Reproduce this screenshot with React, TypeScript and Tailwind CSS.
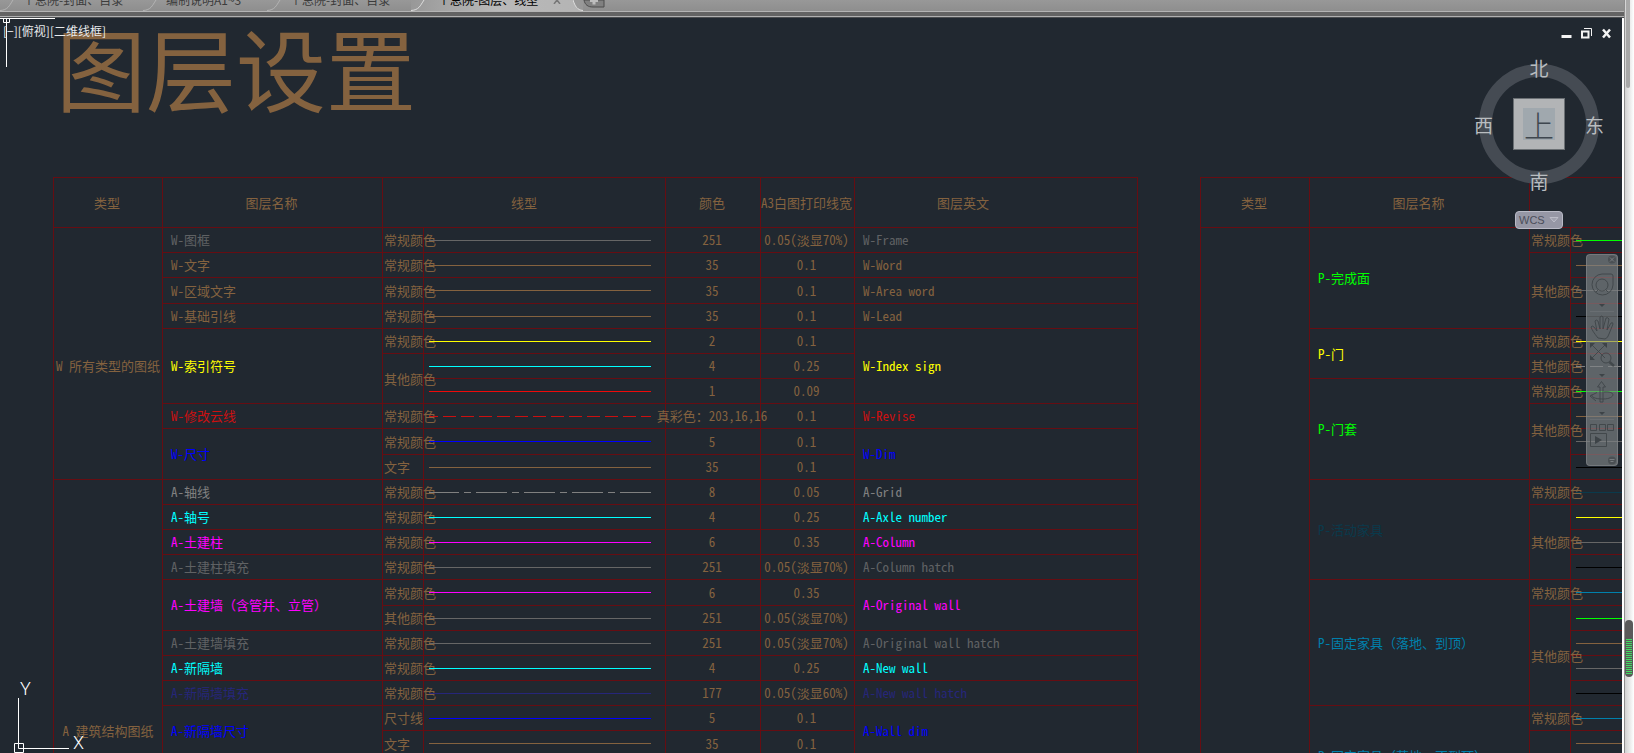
import React from "react";

const BROWN = "#84623f";
const GRAY = "#666666";
const YELLOW = "#ffff00";
const CYAN = "#00ffff";
const RED = "#ee0a0a";
const BLUE = "#0000ff";
const MAGENTA = "#ff00ff";
const GREEN = "#00ff00";
const BLACK = "#000000";
const TEAL = "#0a3a4c";
const SKY = "#0080ac";

type Line = {
  label?: string;
  span?: number;
  raised?: boolean;
  stroke: string;
  dash?: string;
  offset?: number;
  num?: string;
  plot?: string;
};
type Layer = { name: string; note?: string; en?: string; tone: string; lines: Line[] };
type Group = { type: string; span: number; lowered?: boolean; layers: Layer[] };

const PALE = "0.05(淡显70%)";

const leftGroups: Group[] = [
  {
    type: "W 所有类型的图纸",
    span: 10,
    lowered: true,
    layers: [
      { name: "W-图框", en: "W-Frame", tone: "text-[#606264]", lines: [{ label: "常规颜色", stroke: GRAY, num: "251", plot: PALE }] },
      { name: "W-文字", en: "W-Word", tone: "text-[#84623f]", lines: [{ label: "常规颜色", stroke: BROWN, num: "35", plot: "0.1" }] },
      { name: "W-区域文字", en: "W-Area word", tone: "text-[#84623f]", lines: [{ label: "常规颜色", stroke: BROWN, num: "35", plot: "0.1" }] },
      { name: "W-基础引线", en: "W-Lead", tone: "text-[#84623f]", lines: [{ label: "常规颜色", stroke: BROWN, num: "35", plot: "0.1" }] },
      {
        name: "W-索引符号",
        en: "W-Index sign",
        tone: "text-[#ffff00]",
        lines: [
          { label: "常规颜色", stroke: YELLOW, num: "2", plot: "0.1" },
          { label: "其他颜色", span: 2, stroke: CYAN, num: "4", plot: "0.25" },
          { stroke: RED, num: "1", plot: "0.09" },
        ],
      },
      {
        name: "W-修改云线",
        en: "W-Revise",
        tone: "text-[#cb1010]",
        lines: [{ label: "常规颜色", stroke: "#cb1010", dash: "13 5", offset: 4, num: "真彩色：203,16,16", plot: "0.1" }],
      },
      {
        name: "W-尺寸",
        en: "W-Dim",
        tone: "text-[#0000ff]",
        lines: [
          { label: "常规颜色", stroke: BLUE, num: "5", plot: "0.1" },
          { label: "文字", stroke: BROWN, num: "35", plot: "0.1" },
        ],
      },
    ],
  },
  {
    type: "A 建筑结构图纸",
    span: 20,
    layers: [
      { name: "A-轴线", en: "A-Grid", tone: "text-[#808080]", lines: [{ label: "常规颜色", stroke: "#808080", dash: "31 5 7 5", offset: 1, num: "8", plot: "0.05" }] },
      { name: "A-轴号", en: "A-Axle number", tone: "text-[#00ffff]", lines: [{ label: "常规颜色", stroke: CYAN, num: "4", plot: "0.25" }] },
      { name: "A-土建柱", en: "A-Column", tone: "text-[#ff00ff]", lines: [{ label: "常规颜色", stroke: MAGENTA, num: "6", plot: "0.35" }] },
      { name: "A-土建柱填充", en: "A-Column hatch", tone: "text-[#606264]", lines: [{ label: "常规颜色", stroke: GRAY, num: "251", plot: PALE }] },
      {
        name: "A-土建墙",
        note: "（含管井、立管）",
        en: "A-Original wall",
        tone: "text-[#ff00ff]",
        lines: [
          { label: "常规颜色", stroke: MAGENTA, num: "6", plot: "0.35" },
          { label: "其他颜色", stroke: GRAY, num: "251", plot: PALE },
        ],
      },
      { name: "A-土建墙填充", en: "A-Original wall hatch", tone: "text-[#606264]", lines: [{ label: "常规颜色", stroke: GRAY, num: "251", plot: PALE }] },
      { name: "A-新隔墙", en: "A-New wall", tone: "text-[#00ffff]", lines: [{ label: "常规颜色", stroke: CYAN, num: "4", plot: "0.25" }] },
      { name: "A-新隔墙填充", en: "A-New wall hatch", tone: "text-[#26267a]", lines: [{ label: "常规颜色", stroke: "#26267a", num: "177", plot: "0.05(淡显60%)" }] },
      {
        name: "A-新隔墙尺寸",
        en: "A-Wall dim",
        tone: "text-[#0000ff]",
        lines: [
          { label: "尺寸线", stroke: BLUE, num: "5", plot: "0.1" },
          { label: "文字", stroke: BROWN, num: "35", plot: "0.1" },
        ],
      },
    ],
  },
];

const rightGroups: Group[] = [
  {
    type: "",
    span: 24,
    layers: [
      {
        name: "P-完成面",
        tone: "text-[#00ff00]",
        lines: [{ label: "常规颜色", stroke: GREEN }, { label: "其他颜色", span: 3, stroke: BROWN }, { stroke: GRAY }, { stroke: BLACK }],
      },
      {
        name: "P-门",
        tone: "text-[#ffff00]",
        lines: [{ label: "常规颜色", stroke: YELLOW }, { label: "其他颜色", stroke: "#808080", dash: "13 5", offset: 4 }],
      },
      {
        name: "P-门套",
        tone: "text-[#00ff00]",
        lines: [
          { label: "常规颜色", stroke: GREEN },
          { label: "其他颜色", span: 3, raised: true, stroke: BROWN },
          { stroke: GRAY },
          { stroke: BLACK },
        ],
      },
      {
        name: "P-活动家具",
        tone: "text-[#0a3a4c]",
        lines: [{ label: "常规颜色", stroke: TEAL }, { label: "其他颜色", span: 3, stroke: YELLOW }, { stroke: GRAY }, { stroke: BLACK }],
      },
      {
        name: "P-固定家具",
        note: "（落地、到顶）",
        tone: "text-[#0080ac]",
        lines: [{ label: "常规颜色", stroke: SKY }, { label: "其他颜色", span: 4, stroke: GREEN }, { stroke: BROWN }, { stroke: GRAY }, { stroke: BLACK }],
      },
      {
        name: "P-固定家具",
        note: "（落地、不到顶）",
        tone: "text-[#0080ac]",
        lines: [{ label: "常规颜色", stroke: SKY }, { label: "", span: 3, stroke: BROWN }, { stroke: GREEN }, { stroke: GRAY }],
      },
    ],
  },
];

const cell = "border border-[#660d12] p-0 font-normal";
const short = "h-[25px]";
const tall = "h-[26px]";

function Centered({ children }: { children: React.ReactNode }) {
  return <div className="flex justify-center">{children}</div>;
}

function Sample({ line }: { line: Line }) {
  return (
    <svg className="block h-px w-full" shapeRendering="crispEdges" aria-hidden="true">
      <line x1="0" y1="0.5" x2="100%" y2="0.5" stroke={line.stroke} strokeDasharray={line.dash} strokeDashoffset={line.offset} />
    </svg>
  );
}

function LayerTable({ groups, full, pad }: { groups: Group[]; full: boolean; pad: number }) {
  let index = -1;
  const rows: React.ReactNode[] = [];
  groups.forEach((group) => {
    let firstOfGroup = true;
    group.layers.forEach((layer) => {
      layer.lines.forEach((line, i) => {
        index += 1;
        const startsGroup = firstOfGroup;
        firstOfGroup = false;
        rows.push(
          <tr key={index} className={index % 6 === 2 ? tall : short}>
            {startsGroup && (
              <td rowSpan={group.span} className={cell}>
                <div className={group.lowered ? "pt-6" : ""}>
                  <Centered>{group.type}</Centered>
                </div>
              </td>
            )}
            {i === 0 && (
              <td rowSpan={layer.lines.length} className={`${cell} ${layer.tone}`}>
                <div className="pl-2">
                  {layer.name}
                  {layer.note && <span className="[font-feature-settings:normal]">{layer.note}</span>}
                </div>
              </td>
            )}
            {line.label !== undefined && (
              <td rowSpan={line.span ?? 1} className={cell}>
                <div className={line.raised ? "pb-6 pl-px" : "pl-px"}>{line.label}</div>
              </td>
            )}
            <td className={cell}>
              <div className="pr-[14px] pl-[5px]">
                <Sample line={line} />
              </div>
            </td>
            {full && (
              <>
                <td className={`${cell} pr-[2px]`}>
                  <Centered>{line.num}</Centered>
                </td>
                <td className={`${cell} pr-[2px]`}>
                  <Centered>{line.plot}</Centered>
                </td>
              </>
            )}
            {full && i === 0 && (
              <td rowSpan={layer.lines.length} className={`${cell} ${layer.tone}`}>
                <div className="pl-2">{layer.en}</div>
              </td>
            )}
          </tr>
        );
      });
    });
  });
  for (let i = 0; i < pad; i += 1) {
    rows.push(
      <tr key={`pad-${i}`} className={short}>
        <td className={cell} colSpan={full ? 6 : 3} />
      </tr>
    );
  }
  return (
    <table
      className={`shrink-0 table-fixed border-collapse text-left text-[13px] leading-5 whitespace-nowrap text-[#84623f] ${
        full ? "w-[1085px]" : "w-[613px]"
      }`}
    >
      <colgroup>
        <col className="w-[109px]" />
        <col className="w-[220px]" />
        <col className="w-[41px]" />
        <col className="w-[242px]" />
        {full && (
          <>
            <col className="w-[95px]" />
            <col className="w-[94px]" />
            <col className="w-[283px]" />
          </>
        )}
      </colgroup>
      <thead>
        <tr className="h-[50px]">
          <th className={`${cell} pr-[2px]`}>
            <Centered>类型</Centered>
          </th>
          <th className={`${cell} pr-[2px]`}>
            <Centered>图层名称</Centered>
          </th>
          <th className={cell} colSpan={2}>
            <Centered>{full ? "线型" : ""}</Centered>
          </th>
          {full && (
            <>
              <th className={`${cell} pr-[2px]`}>
                <Centered>颜色</Centered>
              </th>
              <th className={`${cell} pr-[2px]`}>
                <Centered>A3白图打印线宽</Centered>
              </th>
              <th className={cell}>
                <div className="pl-[82px]">图层英文</div>
              </th>
            </>
          )}
        </tr>
      </thead>
      <tbody>{rows}</tbody>
    </table>
  );
}

const tabs = [
  { title: "个总院-封面、目录", width: "w-[143px]" },
  { title: "编制说明A1~3", width: "w-[124px]" },
  { title: "个总院-封面、目录", width: "w-[144px]" },
];

function TabEdge({ light }: { light?: boolean }) {
  return (
    <svg className="h-[11px] w-4 shrink-0" viewBox="0 0 16 11" fill="none" aria-hidden="true">
      <path d="M0 10.5 C8 10 9 6 13 0" stroke={light ? "#dedede" : "#b4b4b4"} />
    </svg>
  );
}

function FileTabs() {
  return (
    <header className="shrink-0">
      <nav className="flex h-[11px] items-start overflow-hidden bg-linear-to-b from-[#989898] to-[#8e8e8e] text-xs leading-[14px] whitespace-nowrap text-[#3c3c3c]">
        {tabs.map((tab, i) => (
          <button key={i} type="button" className={`-mt-[7px] flex shrink-0 items-end ${tab.width}`}>
            <TabEdge />
            <span className="pb-1 pl-[7px]">{tab.title}</span>
          </button>
        ))}
        <div className="flex h-[11px] shrink-0 items-start bg-linear-to-r from-[#989898] via-[#b9b9b9] to-[#b4b4b4]">
          <button type="button" className="-mt-[7px] flex items-end text-black">
            <TabEdge light />
            <span className="pb-1 pl-[11px]">个总院-图层、线型</span>
          </button>
          <button type="button" aria-label="关闭" className="ml-[15px]">
            <svg className="h-1 w-2" viewBox="0 0 8 4" stroke="#777" strokeWidth="1.5" aria-hidden="true">
              <path d="M1 4 L4 0 L7 4" fill="none" />
            </svg>
          </button>
          <svg className="ml-3 h-[11px] w-[10px]" viewBox="0 0 10 11" aria-hidden="true">
            <path d="M0 0 C2 6 4 10 10 10.5 L10 0 Z" fill="#989898" />
            <path d="M0 0 C2 6 4 10 10 10.5" fill="none" stroke="#dedede" />
          </svg>
        </div>
        <button type="button" aria-label="新建" className="shrink-0">
          <svg className="block h-2 w-[22px]" viewBox="0 0 22 8" aria-hidden="true">
            <path d="M1 0 C2 5 5 7 10 7 H21 V0 Z" fill="#808080" stroke="#4c4c4c" />
            <path d="M7 0 V2 H9.500 V4.500 H12.500 V2 H15 V0 Z" fill="#bdbdbd" />
          </svg>
        </button>
      </nav>
      <div className="h-px bg-[#b4b4b4]" />
      <div className="h-1 bg-[#636363]" />
      <div className="h-px bg-[#b0b0b0]" />
      <div className="h-px bg-[#4a4d50]" />
    </header>
  );
}

function ViewCube() {
  return (
    <div className="absolute top-10 right-[18px] flex w-[130px] flex-col items-center text-[19px] leading-none text-[#b9bdc0]">
      <svg className="absolute top-[6px] left-[5px] size-[120px]" viewBox="0 0 120 120" aria-hidden="true">
        <circle cx="60" cy="60" r="53.5" fill="none" stroke="#454b53" strokeWidth="13" />
      </svg>
      <span className="relative">北</span>
      <div className="relative mt-[21px] flex w-full items-center justify-between">
        <span>西</span>
        <button
          type="button"
          className="flex size-[52px] items-center justify-center border border-[#6b7074] bg-[#b2b4b6] font-light text-[#3f474f]"
        >
          <span className="flex size-8 items-center justify-center bg-[#a0a8ae] text-[30px] leading-none">上</span>
        </button>
        <span>东</span>
      </div>
      <span className="relative mt-[21px]">南</span>
      <button
        type="button"
        className="relative mt-[21px] flex h-[18px] w-12 items-center justify-between rounded border border-[#b9bac6] bg-[#9697a5] px-[3px] font-['Liberation_Sans',sans-serif] text-[11px] text-[#4b4e5a]"
      >
        WCS
        <svg className="h-[6px] w-[10px]" viewBox="0 0 10 6" aria-hidden="true">
          <path d="M1 0.5 H9 L5 5 Z" fill="#a0a1ae" stroke="#bcbdc8" />
        </svg>
      </button>
    </div>
  );
}

function NavBar() {
  return (
    <div className="absolute top-[236px] right-1 w-8 rounded border border-[#85898c]/60 bg-[#7f8487]/65" role="toolbar" aria-label="导航栏">
      <svg className="block h-[210px] w-full" viewBox="0 0 30 210" fill="none" stroke="#3d4347" strokeOpacity="0.85" aria-hidden="true">
        <circle cx="25" cy="4.5" r="4" fill="#4b5054" stroke="none" />
        <path d="M23 2.5 l4 4 m0 -4 l-4 4" stroke="#7f8487" />
        <path d="M15 19 h9 q2 0 2 2 v9 a10.5 10.5 0 1 1 -11 -11 Z" />
        <circle cx="15" cy="30" r="6" />
        <path d="M9 37 l2 -2 M21 37 l-2 -2" />
        <path d="M12 49 h6 l-3 3 Z" fill="#3d4347" stroke="none" />
        <path d="M3 56.500 h24" stroke="#6b7074" />
        <path d="M11 83 C7 78 5 75 4 72 q1 -2 3 0 l3 4 l-2 -10 q1 -2 3 0 l2 8 l0 -12 q2 -2 3 0 l0 12 l3 -11 q2 -1 3 1 l-2 11 l4 -7 q2 -1 2 1 l-4 10 q-1 4 -4 5 Z" />
        <path d="M5 90 L18 103 M18 90 L5 103" />
        <path d="M3 88 h5 l-5 5 Z M20 88 h-5 l5 5 Z M3 105 h5 l-5 -5 Z" fill="#3d4347" stroke="none" />
        <circle cx="19" cy="103" r="5" />
        <path d="M22.500 107 L27 111" strokeWidth="2.500" />
        <path d="M12 119 h6 l-3 3 Z" fill="#3d4347" stroke="none" />
        <path d="M13 147 V132 h-2.500 L14.500 126.500 L18.500 132 H16 V147 Z" />
        <path d="M17 137 C30 136 28 144 16 144 C8 144 4 142 5 139.500 M10 137.500 L3 141 L9 146" />
        <path d="M12 157 h6 l-3 3 Z" fill="#3d4347" stroke="none" />
        <path d="M3 164.500 h24" stroke="#6b7074" />
        <path d="M3.500 169.500 h6 v6 h-6 Z M12.500 169.500 h6 v6 h-6 Z M20.500 169.500 h6 v6 h-6 Z M3.500 178.500 h16 v13 h-16 Z" />
        <path d="M8 181 L15 185 L8 189 Z" fill="#3d4347" stroke="none" />
        <circle cx="25" cy="205.500" r="4" fill="#4b5054" stroke="none" />
        <path d="M22.500 204.500 h5 M23.500 206.500 h3" stroke="#7f8487" />
      </svg>
    </div>
  );
}

function WindowControls() {
  return (
    <div className="absolute top-[10px] right-[10px] flex items-center gap-[9px]">
      <button type="button" aria-label="最小化">
        <svg className="block h-[11px] w-[11px]" viewBox="0 0 11 11" aria-hidden="true">
          <path d="M0.500 7 h10 v3 h-10 Z" fill="#f4f4f4" />
        </svg>
      </button>
      <button type="button" aria-label="还原">
        <svg className="block h-[11px] w-[11px]" viewBox="0 0 11 11" fill="none" stroke="#f4f4f4" aria-hidden="true">
          <path d="M3 0.500 H10.500 V8" />
          <path d="M1 3.500 H7.500 V9.500 H1 Z" strokeWidth="2" />
        </svg>
      </button>
      <button type="button" aria-label="关闭">
        <svg className="block h-[11px] w-[11px]" viewBox="0 0 11 11" stroke="#f4f4f4" strokeWidth="2.500" aria-hidden="true">
          <path d="M2 1.500 L9 9.500 M9 1.500 L2 9.500" />
        </svg>
      </button>
    </div>
  );
}

function SideStrip() {
  return (
    <aside className="flex w-[10px] shrink-0 flex-col justify-between overflow-hidden border-l border-[#8e8e8e] bg-linear-to-r from-[#d2d2d2] to-white">
      <div className="ml-px h-[88px] w-1 rounded-b-full bg-[#a8a8a8]" />
      <div className="mb-[76px] flex h-[57px] w-2 flex-col justify-end rounded bg-[#5a5a5a] px-px pb-[2px]">
        <svg className="h-[36px] w-full" viewBox="0 0 6 36" preserveAspectRatio="none" aria-hidden="true">
          <path d="M3 0 V36" stroke="#3fdc62" strokeWidth="6" strokeDasharray="1 1" />
        </svg>
      </div>
    </aside>
  );
}

export default function App() {
  return (
    <div className="flex h-screen overflow-hidden bg-[#212830] font-['Noto_Sans_CJK_SC',sans-serif]">
      <div className="flex min-w-0 flex-1 flex-col">
        <FileTabs />
        <main className="relative min-h-0 flex-1 overflow-hidden border-r-2 border-white bg-[#212830] [font-feature-settings:'hwid']">
          <h1 className="flex h-[159px] items-start pl-[56px] text-[90px] leading-[96px] whitespace-nowrap text-[#84623f]">图层设置</h1>
          <div className="flex items-start gap-[62px] pl-[53px]">
            <LayerTable groups={leftGroups} full pad={9} />
            <LayerTable groups={rightGroups} full={false} pad={0} />
          </div>

          <svg className="absolute top-0 left-0 h-[62px] w-14" viewBox="0 0 56 62" fill="none" stroke="#ffffff" aria-hidden="true">
            <path d="M0 0.500 H55 M6.500 0 V49 M3.500 0.500 V4.500 H9.500 V0.500" />
          </svg>
          <div className="absolute top-1 left-[3px] text-xs leading-[18px] whitespace-nowrap text-[#e8eaec] [font-feature-settings:normal]">
            [−][俯视][二维线框]
          </div>

          <div className="absolute bottom-0 left-3 h-[73px] w-20 font-['Roboto',sans-serif] text-lg leading-none font-light text-white [font-feature-settings:normal]">
            <svg className="absolute bottom-0 left-0 h-[56px] w-[60px]" viewBox="0 0 60 56" fill="none" stroke="#ffffff" aria-hidden="true">
              <path d="M6.500 1 V51.500 H57 M2.500 46.500 H11.500 V55.500 H2.500 Z" />
            </svg>
            <span className="absolute top-0 left-2">Y</span>
            <span className="absolute right-2 bottom-px">X</span>
          </div>

          <WindowControls />
          <ViewCube />
          <NavBar />
        </main>
      </div>
      <SideStrip />
    </div>
  );
}
